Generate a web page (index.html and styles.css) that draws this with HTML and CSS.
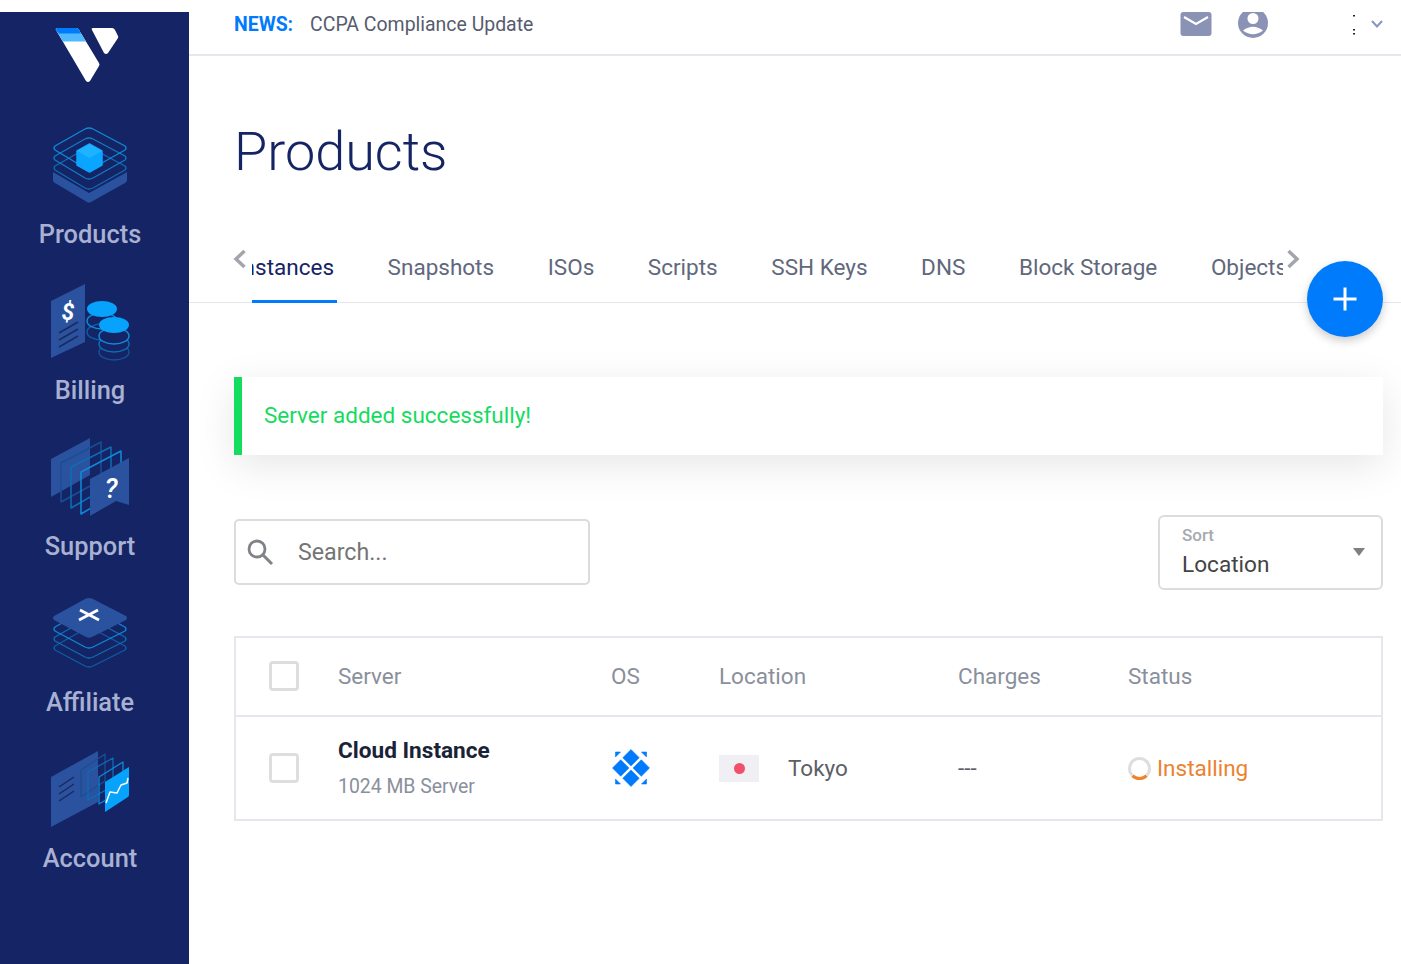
FILE: index.html
```html
<!DOCTYPE html>
<html lang="en">
<head>
  <meta charset="UTF-8" />
  <meta name="viewport" content="width=device-width, initial-scale=1.0"/>
  <title>Products</title>
  <link rel="stylesheet" href="styles.css">
</head>
<body>
  <aside class="sidebar">
    <div class="logo">
      <svg width="64" height="56" viewBox="0 0 64 56">
        <path d="M1 3 Q0 1 3 1 H21 Q23 1 24 3 L44 36 Q45 38 44 39 L35 54 Q33 56 31 54Z" fill="#fff"/>
        <path d="M1 3 Q0 1 3 1 H21 Q23 1 24 3 L31 14.500 H8Z" fill="#51b9ff"/>
        <path d="M1 3 Q0 1 3 1 H21 Q23 1 24 3 L26 6.500 H4Z" fill="#007bfc"/>
        <path d="M37 3 Q36 1 38 1 H57 Q59 1 60 3 L63 9 Q63.500 10 63 11 L53 26 Q51 28 49 26Z" fill="#fff"/>
      </svg>
    </div>
    <nav>
      <a class="nav-item" href="#">
        <svg width="80" height="80" viewBox="0 0 80 80" fill="none" stroke-linejoin="round">
          <path d="M3 47 L39 68 L77 47 V55 Q77 57 75 58 L41 77 Q39 78 37 77 L5 58 Q3 57 3 55Z" fill="#2a529f"/>
          <path d="M35 24 Q39 22 43 24 L75 41 Q77 43 75 45 L43 63 Q39 65 35 63 L5 45 Q3 43 5 41Z" stroke="#0d6db5" stroke-width="1.300"/>
          <path d="M35 14 Q39 12 43 14 L75 31 Q77 33 75 35 L43 53 Q39 55 35 53 L5 35 Q3 33 5 31Z" stroke="#0e7cc6" stroke-width="1.300"/>
          <path d="M35 4 Q39 2 43 4 L75 21 Q77 23 75 25 L43 43 Q39 45 35 43 L5 25 Q3 23 5 21Z" stroke="#0e8ad8" stroke-width="1.300"/>
          <path d="M39.500 19 L52 26 V40 L39.500 47 L27 40 V26Z" fill="#0aa5ff" stroke="#0aa5ff" stroke-width="1.500"/>
          <path d="M39.500 19 L52 26 L39.500 33 L27 26Z" fill="#1fb2ff"/>
        </svg>
        <span class="nav-label">Products</span>
      </a>
      <a class="nav-item" href="#">
        <svg width="80" height="80" viewBox="0 -1 80 80" fill="none">
          <path d="M1 19 L35 2 V60 L1 76Z" fill="#2a529f"/>
          <text x="18" y="38" class="icon-glyph icon-dollar">$</text>
          <path d="M9 51 L28 40 M9 58 L28 47 M9 65 L28 54" stroke="#1b2a5f" stroke-width="1.500"/>
          <ellipse cx="52" cy="50" rx="15" ry="8" stroke="#0d5ea6" stroke-width="1.500"/>
          <ellipse cx="52" cy="39" rx="15" ry="8" stroke="#0e8ad8" stroke-width="1.500"/>
          <ellipse cx="52" cy="27" rx="15" ry="8" fill="#06a2fb"/>
          <ellipse cx="64" cy="70" rx="15" ry="8" stroke="#184f94" stroke-width="1.500"/>
          <ellipse cx="64" cy="62" rx="15" ry="8" fill="#142464" stroke="#0d6db5" stroke-width="1.500"/>
          <ellipse cx="64" cy="54" rx="15" ry="8" fill="#142464" stroke="#0e8ad8" stroke-width="1.500"/>
          <ellipse cx="64" cy="43" rx="15" ry="8" fill="#06a2fb"/>
        </svg>
        <span class="nav-label">Billing</span>
      </a>
      <a class="nav-item" href="#">
        <svg width="80" height="80" viewBox="0 1 80 80" fill="none" stroke-linejoin="round">
          <path d="M1 23 L40 2 V39 L1 61Z" fill="#2a529f"/>
          <path d="M11 27 L51 6 V44 L11 66Z" stroke="#184f94" stroke-width="1.500"/>
          <path d="M21 31 L61 11 V49 L21 72Z" stroke="#0d6db5" stroke-width="1.500"/>
          <path d="M31 36 L71 15 V54 L31 78Z" stroke="#0e8ad8" stroke-width="1.500"/>
          <path d="M40 43 L79 22 V69 L66 65 L40 80Z" fill="#2a529f"/>
          <text x="61" y="62" class="icon-glyph icon-question">?</text>
        </svg>
        <span class="nav-label">Support</span>
      </a>
      <a class="nav-item" href="#">
        <svg width="80" height="80" viewBox="0 -3 80 80" fill="none" stroke-linejoin="round">
          <path d="M35 33 Q39 31 43 33 L75 50 Q77 52 75 54 L43 70 Q39 72 35 70 L5 54 Q3 52 5 50Z" stroke="#0d5ea6" stroke-width="1.300"/>
          <path d="M35 24 Q39 22 43 24 L75 41 Q77 43 75 45 L43 61 Q39 63 35 61 L5 45 Q3 43 5 41Z" stroke="#0d6db5" stroke-width="1.300"/>
          <path d="M35 14 Q39 12 43 14 L75 31 Q77 33 75 35 L43 51 Q39 53 35 51 L5 35 Q3 33 5 31Z" stroke="#0e8ad8" stroke-width="1.300"/>
          <path d="M4 20 Q2 22 4 24 L36 41 Q39 42.500 42 41 L76 24 Q78 22 76 20 L43 3 Q39 1 35 3Z" fill="#2a529f"/>
          <path d="M29 24 L48 14 M30 14 L49 24" stroke="#fff" stroke-width="2.800"/>
        </svg>
        <span class="nav-label">Affiliate</span>
      </a>
      <a class="nav-item" href="#">
        <svg width="80" height="80" viewBox="0 0 80 80" fill="none" stroke-linejoin="round">
          <path d="M1 28 L48 2 V53 L1 78Z" fill="#2a529f"/>
          <path d="M9 38 L24 28 M9 45 L24 35 M9 52 L24 42" stroke="#1b2a5f" stroke-width="1.500"/>
          <path d="M31 21 L55 5 V32 L31 48Z" stroke="#184f94" stroke-width="1.300"/>
          <path d="M38 23 L63 9 V37 L38 51Z" stroke="#0d6db5" stroke-width="1.300"/>
          <path d="M49 28 L73 13 V41 L49 55Z" stroke="#0e8ad8" stroke-width="1.300"/>
          <path d="M55 33 L79 18 V46 Q79 47 78 48 L55 63Z" fill="#06a2fb"/>
          <path d="M56 54 L60 43 L67 44 L71 36 L77 34 L78 29" stroke="#fff" stroke-width="1.500"/>
        </svg>
        <span class="nav-label">Account</span>
      </a>
    </nav>
  </aside>

  <div class="main">
    <header class="topbar">
      <div class="news">
        <strong class="news-tag">NEWS:</strong>
        <span class="news-text">CCPA Compliance Update</span>
      </div>
      <div class="top-icons">
        <svg class="top-mail" width="32" height="24" viewBox="0 0 32 24">
          <rect x="0.500" y="0" width="31" height="24" rx="3" fill="#8a93b5"/>
          <path d="M4 5 L16 12 L28 5" fill="none" stroke="#fff" stroke-width="2.200"/>
        </svg>
        <svg class="top-user" width="30" height="26" viewBox="0 0 30 26">
          <circle cx="15" cy="11" r="15" fill="#8a93b5"/>
          <circle cx="15" cy="6.500" r="5.500" fill="#fff"/>
          <path d="M5 18.500 Q15 11 25 18.500 Q15 26 5 18.500Z" fill="#fff"/>
        </svg>
        <svg class="top-dots" width="4" height="22" viewBox="0 0 4 22">
          <rect x="1" y="0" width="2" height="1.500" fill="#222"/>
          <rect x="1" y="14" width="2" height="1.500" fill="#222"/>
          <rect x="1" y="18" width="2" height="1.500" fill="#222"/>
        </svg>
        <svg class="top-chevron" width="12" height="8" viewBox="0 0 12 8">
          <path d="M1 1 L6 6.500 L11 1" fill="none" stroke="#8397c4" stroke-width="2"/>
        </svg>
      </div>
    </header>

    <h1 class="page-title">Products</h1>

    <div class="tabs-bar">
      <svg class="tab-arrow tab-arrow-left" width="14" height="20" viewBox="0 0 14 20">
        <path d="M11.500 2 L3 10 L11.500 18" fill="none" stroke="#a2a6ac" stroke-width="3.500"/>
      </svg>
      <div class="tabs-window">
        <div class="tabs">
          <a class="tab active" href="#">Instances</a>
          <a class="tab" href="#">Snapshots</a>
          <a class="tab" href="#">ISOs</a>
          <a class="tab" href="#">Scripts</a>
          <a class="tab" href="#">SSH Keys</a>
          <a class="tab" href="#">DNS</a>
          <a class="tab" href="#">Block Storage</a>
          <a class="tab" href="#">Objects</a>
        </div>
      </div>
      <svg class="tab-arrow tab-arrow-right" width="14" height="20" viewBox="0 0 14 20">
        <path d="M2.500 2 L11 10 L2.500 18" fill="none" stroke="#a2a6ac" stroke-width="3.500"/>
      </svg>
      <button class="fab" type="button">
        <svg width="26" height="26" viewBox="0 0 26 26">
          <path d="M13 1.500 V24.500 M1.500 13 H24.500" stroke="#fff" stroke-width="3"/>
        </svg>
      </button>
    </div>

    <section class="content">
      <div class="alert">Server added successfully!</div>

      <div class="controls">
        <label class="search">
          <svg width="28" height="28" viewBox="0 0 28 28" fill="none">
            <circle cx="11" cy="11" r="8" stroke="#808289" stroke-width="2.800"/>
            <path d="M17 17 L26 26" stroke="#808289" stroke-width="3"/>
          </svg>
          <input class="search-input" type="text" placeholder="Search...">
        </label>
        <div class="sort">
          <div class="sort-text">
            <span class="sort-label">Sort</span>
            <span class="sort-value">Location</span>
          </div>
          <span class="sort-arrow"></span>
        </div>
      </div>

      <div class="table">
        <div class="row row-head">
          <div class="cell"><span class="checkbox"></span></div>
          <div class="cell">Server</div>
          <div class="cell">OS</div>
          <div class="cell">Location</div>
          <div class="cell">Charges</div>
          <div class="cell">Status</div>
        </div>
        <div class="row row-body">
          <div class="cell"><span class="checkbox"></span></div>
          <div class="cell server-cell">
            <span class="server-name">Cloud Instance</span>
            <span class="server-plan">1024 MB Server</span>
          </div>
          <div class="cell">
            <svg class="os-icon" width="40" height="40" viewBox="0 0 40 40" fill="#007bfc" stroke="#007bfc" stroke-width="0.600" stroke-linejoin="round">
              <path d="M20 1.500 L28.200 9.700 L20 17.900 L11.800 9.700Z M20 22.100 L28.200 30.300 L20 38.500 L11.800 30.300Z M9.700 11.800 L17.900 20 L9.700 28.200 L1.500 20Z M30.300 11.800 L38.500 20 L30.300 28.200 L22.100 20Z"/>
              <path d="M4.500 4 H9.500 L4.500 9Z M35.500 4 H30.500 L35.500 9Z M4.500 36 H9.500 L4.500 31Z M35.500 36 H30.500 L35.500 31Z"/>
            </svg>
          </div>
          <div class="cell location-cell">
            <span class="flag"><span class="flag-dot"></span></span>
            <span class="location-name">Tokyo</span>
          </div>
          <div class="cell charges-cell">---</div>
          <div class="cell status-cell">
            <span class="spinner"></span>
            <span class="status-text">Installing</span>
          </div>
        </div>
      </div>
    </section>
  </div>
</body>
</html>
```

FILE: styles.css
```css
* {
  box-sizing: border-box;
}

html, body {
  height: 100%;
}

body {
  margin: 0;
  display: flex;
  background: #fff;
  font-family: Roboto, 'Liberation Sans', sans-serif;
  overflow: hidden;
}

a {
  text-decoration: none;
}

/* sidebar */
.sidebar {
  width: 189px;
  flex-shrink: 0;
  margin-top: 12px;
  background-color: #142464;
}

.logo {
  height: 113px;
  padding: 15px 0 0 55px;
}

.nav-item {
  display: flex;
  flex-direction: column;
  align-items: center;
  width: 180px;
  height: 156px;
}

.nav-label {
  margin-top: 14px;
  font-size: 25.400px;
  line-height: 30px;
  font-weight: 500;
  color: #a9b1d3;
}

.icon-glyph {
  fill: #fff;
  font-family: Roboto, sans-serif;
  font-weight: 700;
  font-style: italic;
  text-anchor: middle;
}

.icon-dollar {
  font-size: 23px;
}

.icon-question {
  font-size: 27px;
  font-weight: 500;
}

/* top bar */
.main {
  flex: 1;
  min-width: 0;
  margin-top: 12px;
}

.topbar {
  display: flex;
  justify-content: space-between;
  height: 44px;
  padding: 0 18px 0 45px;
  border-bottom: 2px solid #e6e6ec;
  overflow: hidden;
}

.news {
  display: flex;
  align-items: center;
  gap: 17px;
  height: 24px;
  font-size: 19.450px;
}

.news-tag {
  color: #007bfc;
  font-weight: 700;
}

.news-text {
  color: #565c6e;
}

.top-icons {
  display: flex;
  align-items: flex-start;
}

.top-mail {
  margin-right: 26px;
}

.top-user {
  margin-right: 84px;
}

.top-dots {
  margin-top: 3px;
  margin-right: 15px;
}

.top-chevron {
  margin-top: 8px;
}

.page-title {
  margin: 64px 0 0 45px;
  font-size: 54px;
  line-height: 64px;
  font-weight: 300;
  color: #142464;
}

/* tabs */
.tabs-bar {
  position: relative;
  margin-top: 69px;
  padding-left: 63px;
  border-bottom: 1px solid #e6e6ec;
}

.tabs-window {
  width: 1031px;
  overflow: hidden;
  margin-bottom: -1px;
}

.tabs {
  display: flex;
  gap: 47.600px;
  margin-left: -18.500px;
}

.tab {
  flex-shrink: 0;
  padding: 0 3px 19px;
  border-bottom: 3px solid transparent;
  font-size: 22.500px;
  line-height: 28px;
  color: #61677c;
}

.tab.active {
  color: #142464;
  border-bottom-color: #007bfc;
}

.tab-arrow {
  position: absolute;
  top: -4px;
}

.tab-arrow-left {
  left: 44px;
}

.tab-arrow-right {
  left: 1097px;
}

.fab {
  position: absolute;
  top: 8px;
  right: 18px;
  display: flex;
  align-items: center;
  justify-content: center;
  width: 76px;
  height: 76px;
  padding: 0;
  border: none;
  border-radius: 50%;
  background-color: #007bfc;
  box-shadow: 0 4px 10px rgba(0,0,0,0.2);
}

/* content */
.content {
  margin: 74px 18px 0 45px;
}

.alert {
  height: 78px;
  padding-left: 22px;
  border-left: 8px solid #15db5f;
  font-size: 22.500px;
  line-height: 76px;
  color: #15db5f;
  box-shadow: 0 10px 40px rgba(0,0,0,0.1);
}

.controls {
  display: flex;
  align-items: center;
  justify-content: space-between;
  margin-top: 60px;
}

.search {
  display: flex;
  align-items: center;
  width: 356px;
  height: 66px;
  margin-bottom: 1px;
  padding-left: 10px;
  border: 2px solid #dcdcdc;
  border-radius: 5px;
}

.search-input {
  flex: 1;
  min-width: 0;
  margin-left: 24px;
  padding: 0;
  border: none;
  outline: none;
  background: transparent;
  font-family: inherit;
  font-size: 23.200px;
  color: #757575;
}

.search-input::placeholder {
  color: #757575;
  opacity: 1;
}

.sort {
  display: flex;
  align-items: center;
  justify-content: space-between;
  width: 225px;
  height: 75px;
  padding: 0 16px 0 22px;
  border: 2px solid #dcdcdc;
  border-radius: 6px;
}

.sort-text {
  display: flex;
  flex-direction: column;
}

.sort-label {
  font-size: 17px;
  line-height: 20px;
  font-weight: 500;
  color: #a6aab0;
}

.sort-value {
  margin-top: 3px;
  font-size: 22.600px;
  line-height: 33px;
  color: #444;
}

.sort-arrow {
  width: 0;
  height: 0;
  margin-bottom: 2px;
  border-left: 6px solid transparent;
  border-right: 6px solid transparent;
  border-top: 8px solid #808080;
}

/* table */
.table {
  margin-top: 46px;
  border: 2px solid #e6e6ec;
}

.row {
  display: grid;
  grid-template-columns: 102px 273px 108px 239px 170px 1fr;
  align-items: center;
}

.row-head {
  height: 79px;
  padding-bottom: 2px;
  border-bottom: 2px solid #e6e6ec;
  font-size: 22.500px;
  color: #8a8f9c;
}

.row-body {
  height: 102px;
  font-size: 22.500px;
}

.checkbox {
  display: block;
  width: 30px;
  height: 30px;
  margin-left: 33px;
  border: 3px solid #dedede;
  border-radius: 4px;
}

.server-cell {
  display: flex;
  flex-direction: column;
}

.server-name {
  font-size: 22.600px;
  line-height: 30px;
  font-weight: 700;
  color: #1a2336;
}

.server-plan {
  margin-top: 7px;
  font-size: 19.400px;
  line-height: 28px;
  color: #8a8f9c;
}

.os-icon {
  display: block;
}

.location-cell {
  display: flex;
  align-items: center;
  gap: 29px;
}

.flag {
  display: flex;
  align-items: center;
  justify-content: center;
  width: 40px;
  height: 27px;
  background-color: #f0f0f4;
}

.flag-dot {
  width: 11px;
  height: 11px;
  border-radius: 50%;
  background-color: #f0506a;
}

.location-name {
  color: #5c5f66;
}

.charges-cell {
  color: #5c5f66;
}

.status-cell {
  display: flex;
  align-items: center;
  gap: 6px;
}

.spinner {
  width: 23px;
  height: 23px;
  border: 3px solid #dedede;
  border-bottom-color: #f0832a;
  border-radius: 50%;
}

.status-text {
  color: #ec8230;
}
```
